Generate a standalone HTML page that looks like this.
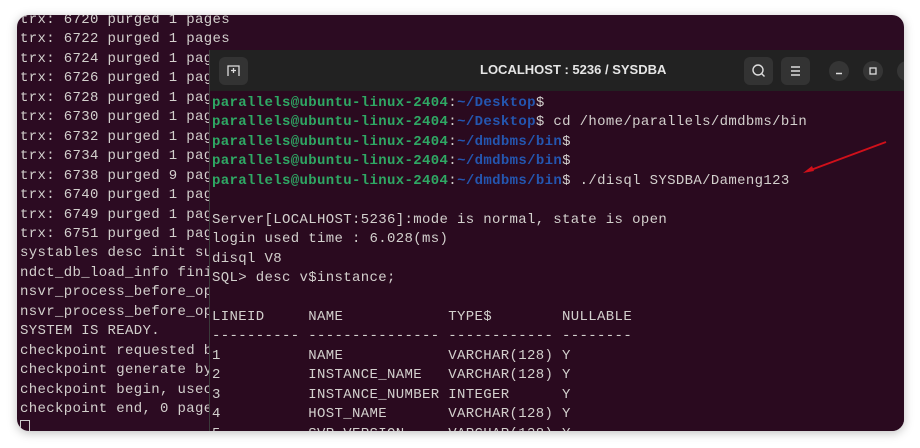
<!DOCTYPE html>
<html><head><meta charset="utf-8"><style>
html,body{margin:0;padding:0;background:#fff;width:920px;height:448px;overflow:hidden}
.win{position:absolute;left:17px;top:15px;width:887px;height:416px;background:#2c0b22;border-radius:12px;overflow:hidden;box-shadow:0 2px 10px rgba(0,0,0,.25)}
pre{margin:0;font-family:"Liberation Mono",monospace;font-size:14px;line-height:19.45px;color:#d3d0cd;letter-spacing:0.35px}
.back{position:absolute;left:3px;top:-4px}
.front{position:absolute;left:192px;top:35px;width:720px;height:400px;background:#2a0a1f;border-left:1px solid #3a3a3a}
.hdr{position:absolute;left:0;top:0;width:100%;height:41px;background:#222222}
.fbody{position:absolute;left:2px;top:44px;letter-spacing:0.35px}
.g{color:#2fa864;font-weight:bold}.b{color:#2456b0;font-weight:bold}
.btn{position:absolute;top:7px;width:29px;height:28px;background:#333;border-radius:6px}
.cir{position:absolute;top:11px;width:20px;height:20px;background:#353535;border-radius:50%}
.title{position:absolute;left:270px;top:12px;font-family:"Liberation Sans",sans-serif;font-weight:bold;font-size:13px;color:#e6e6e6}
</style></head><body>
<div class="win">
<pre class="back">trx: 6720 purged 1 pages
trx: 6722 purged 1 pages
trx: 6724 purged 1 pag
trx: 6726 purged 1 pag
trx: 6728 purged 1 pag
trx: 6730 purged 1 pag
trx: 6732 purged 1 pag
trx: 6734 purged 1 pag
trx: 6738 purged 9 pag
trx: 6740 purged 1 pag
trx: 6749 purged 1 pag
trx: 6751 purged 1 pag
systables desc init su
ndct_db_load_info fini
nsvr_process_before_op
nsvr_process_before_op
SYSTEM IS READY.
checkpoint requested b
checkpoint generate by
checkpoint begin, usec
checkpoint end, 0 page
<span style="display:inline-block;width:8px;height:15px;border:1px solid #ccc;vertical-align:-3px"></span></pre>
<div class="front">
<div class="hdr">
<div class="btn" style="left:9px"><svg width="29" height="28"><path d="M9 19V9h11v10M14.5 11v5M12 13.5h5" stroke="#ddd" stroke-width="1.3" fill="none"/></svg></div>
<div class="title">LOCALHOST : 5236 / SYSDBA</div>
<div class="btn" style="left:534px"><svg width="29" height="28"><circle cx="14" cy="13" r="5" stroke="#ddd" stroke-width="1.4" fill="none"/><path d="M17.5 16.5l3 3" stroke="#ddd" stroke-width="1.4"/></svg></div>
<div class="btn" style="left:571px"><svg width="29" height="28"><path d="M10 10h9M10 14h9M10 18h9" stroke="#ddd" stroke-width="1.4"/></svg></div>
<div class="cir" style="left:619px"><svg width="20" height="20"><path d="M7 12.5h6" stroke="#ddd" stroke-width="1.4"/></svg></div>
<div class="cir" style="left:653px"><svg width="20" height="20"><rect x="7" y="7" width="6" height="6" stroke="#ddd" stroke-width="1.3" fill="none"/></svg></div>
<div class="cir" style="left:687px"></div>
</div>
<pre class="fbody"><span class="g">parallels@ubuntu-linux-2404</span>:<span class="b">~/Desktop</span>$
<span class="g">parallels@ubuntu-linux-2404</span>:<span class="b">~/Desktop</span>$ cd /home/parallels/dmdbms/bin
<span class="g">parallels@ubuntu-linux-2404</span>:<span class="b">~/dmdbms/bin</span>$
<span class="g">parallels@ubuntu-linux-2404</span>:<span class="b">~/dmdbms/bin</span>$
<span class="g">parallels@ubuntu-linux-2404</span>:<span class="b">~/dmdbms/bin</span>$ ./disql SYSDBA/Dameng123

Server[LOCALHOST:5236]:mode is normal, state is open
login used time : 6.028(ms)
disql V8
SQL&gt; desc v$instance;

LINEID     NAME            TYPE$        NULLABLE
---------- --------------- ------------ --------
1          NAME            VARCHAR(128) Y
2          INSTANCE_NAME   VARCHAR(128) Y
3          INSTANCE_NUMBER INTEGER      Y
4          HOST_NAME       VARCHAR(128) Y
5          SVR_VERSION     VARCHAR(128) Y</pre>
</div>
</div>
<svg style="position:absolute;left:0;top:0" width="920" height="448"><path d="M886 142L808 171" stroke="#d0101a" stroke-width="2"/><path d="M803 173l9-7 2 5z" fill="#d0101a"/></svg>
</body></html>
